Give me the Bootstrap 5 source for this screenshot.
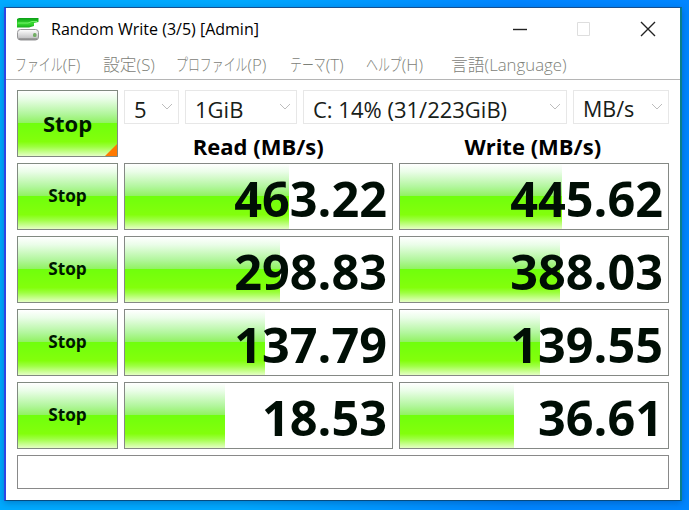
<!DOCTYPE html>
<html lang="ja">
<head>
<meta charset="utf-8">
<meta name="viewport" content="width=device-width, initial-scale=1">
<title>Random Write (3/5) [Admin]</title>
<link href="https://cdn.jsdelivr.net/npm/bootstrap@5.3.0/dist/css/bootstrap.min.css" rel="stylesheet">
<style>
body{width:689px;height:510px;overflow:hidden;padding:7px 7px 8px 4px;font-family:"Open Sans","Noto Sans CJK JP",sans-serif;color:#000;
 background:linear-gradient(90deg,#0af 0,#00a8ff 35%,#0084ff 75%,#0086ff 100%)}
.app-window{height:494px;background:#fff;border:1px solid #174f90;border-left:2px solid #2e45e4;border-right:2px solid #087f8c;border-bottom-color:#074b80;box-shadow:0 2px 7px #003c8066}
.title-bar{height:41px;padding-left:10px}
.title-text{font-size:16px;margin-left:11px;width:400px;white-space:nowrap;line-height:22px}
.menu-bar{height:31px;border-bottom:1px solid #b5b5b5;font-size:16.8px;color:#7d8178;line-height:31px;white-space:nowrap;font-weight:300}
.menu-entry{flex:none}
.kana{display:inline-block;transform:scaleX(.71);transform-origin:0 50%;margin-right:calc(var(--n)*-.29em)}
.n3{--n:3}.n4{--n:4}.n6{--n:6}
.m1{width:88px;margin-left:9px}.m2{width:73px}.m3{width:114px}.m4{width:76px}.m5{width:85px}
.workspace{padding:10px 11px 0}
.bench{display:grid;grid-template-columns:101px 269px 270px;column-gap:6px;row-gap:6px;grid-template-rows:67px 67px 67px 67px 67px 34px}
.wide-cell{grid-column:2/4}
.stop{border:1px solid #818a81;border-radius:0;padding:0 0 2px;font-weight:700;font-size:17.2px;position:relative;color:#001800}
.green,.stop{background:linear-gradient(#fff 0,#eafde8 12%,#b2f69d 35%,#91f262 49%,#70ff0c 50%,#83ff0c 78%,#9eff43 86%,#e5ffc5 100%)}
.stop-all{font-size:22px;padding:0}
.stop-all::after{content:"";position:absolute;right:0;bottom:0;border-left:12px solid transparent;border-bottom:12px solid #ff7900}
.meter{border:1px solid #858985;background:#fff;display:grid;grid-template-rows:65px}
.meter>*{grid-area:1/1}
.reading{font-size:48.6px;font-weight:700;line-height:60px;text-align:right;padding:4px 5px 0 0;color:#000e05}
.choice{height:34px;border:1px solid #e7e7e7;font-size:22px;padding:4px 5px 0 9px;color:#172018;white-space:nowrap;line-height:30px}
.choice svg{flex:none;margin-top:-4px}
.c1{width:55px}.c2{width:112px}.c3{width:264px}.c4{width:96px}
.c4{font-size:21.5px}
.heading{font-size:22px;font-weight:700;text-align:center;line-height:30px;margin-top:7px;height:26px}
.h-read{padding-right:4px}
.status-line{grid-column:1/4;border:1px solid #898989}
</style>
<script src="https://cdn.jsdelivr.net/npm/bootstrap@5.3.0/dist/js/bootstrap.bundle.min.js"></script>
</head>
<body>
<main class="app-window">
<header class="title-bar d-flex align-items-center">
<svg width="24" height="24" viewBox="0 0 24 24"><defs><linearGradient id="g" x2="0" y2="1"><stop stop-color="#0a9f16"/><stop offset=".6" stop-color="#39dc31"/><stop offset="1" stop-color="#16a91a"/></linearGradient><linearGradient id="h" x2="0" y2="1"><stop stop-color="#fff"/><stop offset="1" stop-color="#b6b6b8"/></linearGradient></defs><path d="M1 2 3 1H22.5V5L18 6V9L13 10.5H1Z" fill="url(#g)"/><path d="M2 6h10l4-1.500h5" stroke="#72f06a" fill="none"/><rect x="1.500" y="12.500" width="21" height="10.500" rx="3" fill="url(#h)" stroke="#969698"/><path d="M3 22H21" stroke="#777"/><rect x="17" y="16" width="3.500" height="4" rx="1.500" fill="#72ad65"/></svg>
<div class="title-text">Random Write (3/5) [Admin]</div>
<svg class="ms-auto me-0 flex-shrink-0" width="169" height="24" viewBox="0 0 169 24" fill="none"><path d="M2 12.5H16" stroke="#222" stroke-width="1.4"/><path d="M66.5 5.5h12v13h-12z" stroke="#dedede"/><path d="M130 5l14 14m0-14-14 14" stroke="#222" stroke-width="1.4"/></svg>
</header>
<nav class="menu-bar d-flex">
<span class="menu-entry m1"><span class="kana n4">ファイル</span>(F)</span>
<span class="menu-entry m2">設定(S)</span>
<span class="menu-entry m3"><span class="kana n6">プロファイル</span>(P)</span>
<span class="menu-entry m4"><span class="kana n3">テーマ</span>(T)</span>
<span class="menu-entry m5"><span class="kana n3">ヘルプ</span>(H)</span>
<span class="menu-entry m6">言語(Language)</span>
</nav>
<section class="workspace"><div class="bench">
<button class="btn stop stop-all">Stop</button>
<div class="wide-cell">
<div class="d-flex justify-content-between">
<div class="choice c1 d-flex justify-content-between align-items-center">5<svg width="12" height="8" fill="none" stroke="#bdbdbd"><path d="M1 1l5 5 5-5"/></svg></div>
<div class="choice c2 d-flex justify-content-between align-items-center">1GiB<svg width="12" height="8" fill="none" stroke="#bdbdbd"><path d="M1 1l5 5 5-5"/></svg></div>
<div class="choice c3 d-flex justify-content-between align-items-center">C: 14% (31/223GiB)<svg width="12" height="8" fill="none" stroke="#bdbdbd"><path d="M1 1l5 5 5-5"/></svg></div>
<div class="choice c4 d-flex justify-content-between align-items-center">MB/s<svg width="12" height="8" fill="none" stroke="#bdbdbd"><path d="M1 1l5 5 5-5"/></svg></div>
</div>
<div class="d-flex"><div class="heading h-read w-50">Read (MB/s)</div><div class="heading w-50">Write (MB/s)</div></div>
</div>
<button class="btn stop">Stop</button>
<div class="meter"><div class="green" style="width:164px"></div><div class="reading">463.22</div></div>
<div class="meter"><div class="green" style="width:162px"></div><div class="reading">445.62</div></div>
<button class="btn stop">Stop</button>
<div class="meter"><div class="green" style="width:155px"></div><div class="reading">298.83</div></div>
<div class="meter"><div class="green" style="width:160px"></div><div class="reading">388.03</div></div>
<button class="btn stop">Stop</button>
<div class="meter"><div class="green" style="width:140px"></div><div class="reading">137.79</div></div>
<div class="meter"><div class="green" style="width:140px"></div><div class="reading">139.55</div></div>
<button class="btn stop">Stop</button>
<div class="meter"><div class="green" style="width:100px"></div><div class="reading">18.53</div></div>
<div class="meter"><div class="green" style="width:114px"></div><div class="reading">36.61</div></div>
<div class="status-line"></div>
</div></section>
</main>
</body>
</html>
